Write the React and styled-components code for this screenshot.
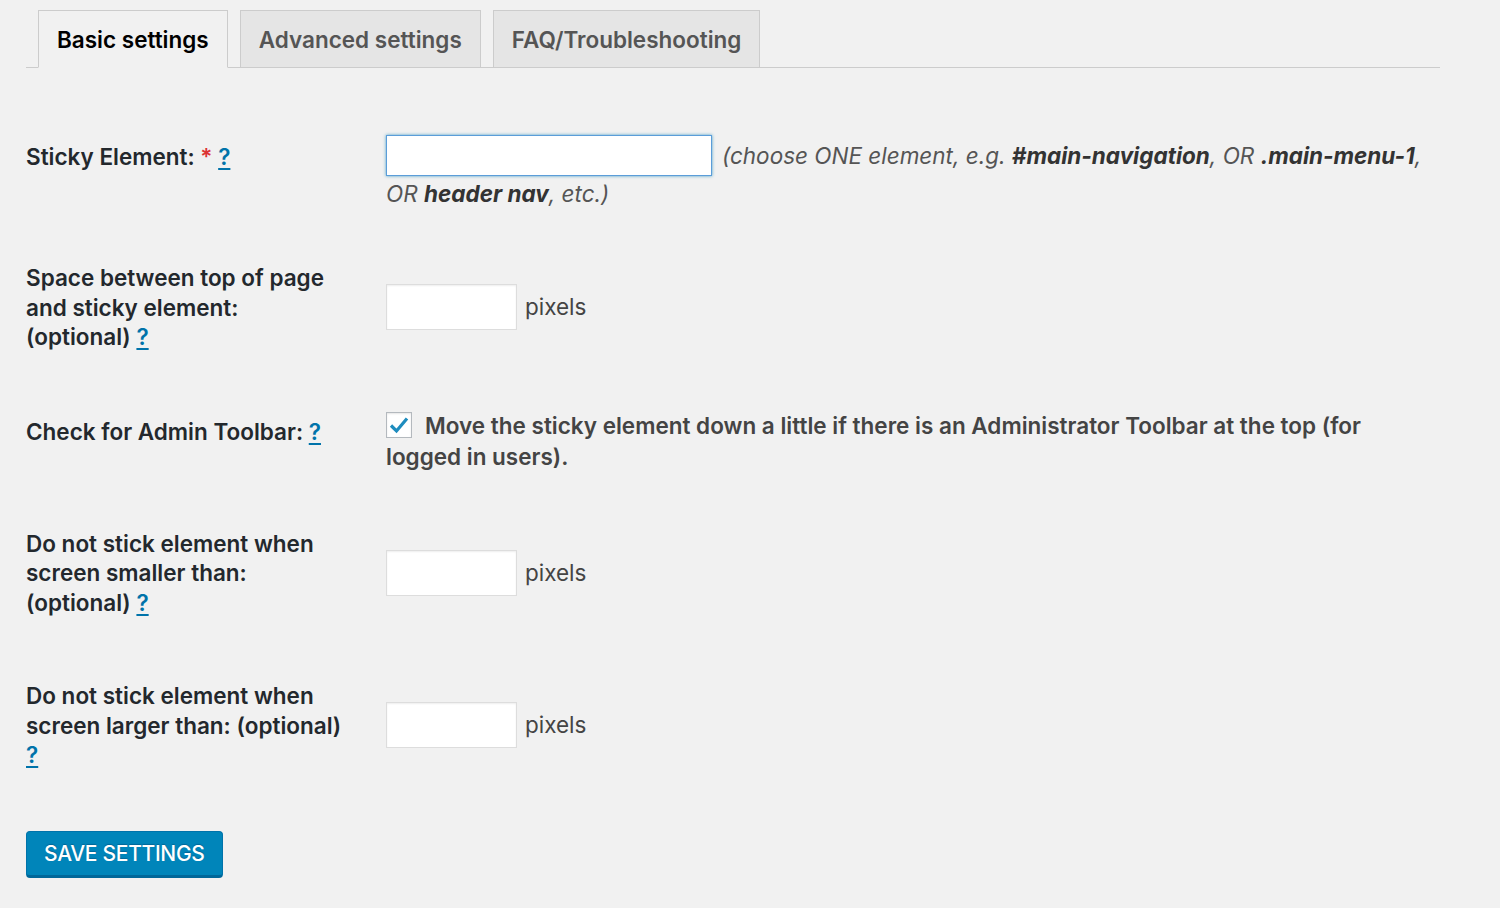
import React, { useState } from "react";
import styled, { createGlobalStyle } from "styled-components";

const GlobalStyle = createGlobalStyle`
  body {
    margin: 0;
    background: #f1f1f1;
    font-family: Inter, "Liberation Sans", sans-serif;
    color: #444;
  }
`;

const Page = styled.div`
  width: 1414px;
  padding: 10px 0 0 26px;
`;

const TabNav = styled.nav`
  display: flex;
  gap: 12px;
  padding-left: 12px;
  border-bottom: 1px solid #ccc;
`;

const Tab = styled.a`
  display: flex;
  align-items: center;
  height: 56px;
  padding: 0 18px;
  margin-bottom: -1px;
  border: 1px solid #ccc;
  border-bottom-color: ${(p) => (p.$active ? "#f1f1f1" : "#ccc")};
  background: ${(p) => (p.$active ? "#f1f1f1" : "#e5e5e5")};
  color: ${(p) => (p.$active ? "#000" : "#555")};
  font-size: 22.5px;
  font-weight: 600;
  text-decoration: none;
  cursor: pointer;
`;

const Form = styled.form`
  display: flex;
  flex-direction: column;
  padding-top: 67px;
`;

const Row = styled.div`
  display: grid;
  grid-template-columns: 360px 1fr;
  align-items: ${(p) => (p.$center ? "center" : "start")};
  margin-top: ${(p) => p.$top}px;
`;

const Label = styled.div`
  max-width: 318px;
  font-size: 22.5px;
  font-weight: 600;
  line-height: 29.5px;
  color: #23282d;
  margin-top: ${(p) => p.$offset || 0}px;
`;

const Help = styled.a`
  color: #0073aa;
  text-decoration: underline;
  text-underline-offset: 3px;
  cursor: pointer;
`;

const Required = styled.span`
  color: #dc3232;
`;

const Field = styled.div`
  font-size: 22.5px;
  line-height: ${(p) => p.$lh || 35}px;
  color: #444;
`;

const TextInput = styled.input`
  box-sizing: border-box;
  width: ${(p) => p.$w}px;
  height: ${(p) => p.$h}px;
  vertical-align: middle;
  background: #fff;
  border: 1px solid ${(p) => (p.$focus ? "#5b9dd9" : "#ddd")};
  box-shadow: ${(p) =>
    p.$focus
      ? "0 0 3px rgba(30, 140, 190, 0.8)"
      : "inset 0 1px 2px rgba(0, 0, 0, 0.07)"};
  border-radius: 0;
  outline: none;
  font: inherit;
  padding: 0 8px;
`;

const Desc = styled.span`
  font-style: italic;
  color: #555;
  margin-left: 10px;
  position: relative;
  top: 2px;
  b {
    color: #333;
    font-weight: 700;
  }
`;

const Unit = styled.span`
  margin-left: 8px;
  position: relative;
  top: 2px;
`;

const CheckLabel = styled.label`
  font-weight: 600;
  color: #444;
`;

const Box = styled.span`
  display: inline-flex;
  align-items: center;
  justify-content: center;
  box-sizing: border-box;
  width: 26px;
  height: 26px;
  margin-right: 13px;
  vertical-align: middle;
  position: relative;
  top: -2px;
  background: #fff;
  border: 1px solid #b4b9be;
  box-shadow: inset 0 1px 2px rgba(0, 0, 0, 0.1);
  cursor: pointer;
`;

const SaveButton = styled.button`
  align-self: flex-start;
  margin-top: 61px;
  height: 47px;
  padding: 0 17px;
  background: #0085ba;
  border: 1px solid #0073aa;
  border-bottom: 3px solid #006799;
  border-radius: 4px;
  color: #fff;
  font-family: Inter, "Liberation Sans", sans-serif;
  font-size: 21px;
  font-weight: 500;
  letter-spacing: -0.3px;
  text-transform: uppercase;
  text-shadow: 0 -1px 1px #006799;
  cursor: pointer;
`;

const Check = () => (
  <svg width="20" height="18" viewBox="0 0 20 18">
    <path d="M2 9.5 L7.5 15 L18 2.5" fill="none" stroke="#1e8cbe" strokeWidth="3.2" />
  </svg>
);

const App = () => {
  const [tab, setTab] = useState(0);
  const [admin, setAdmin] = useState(true);
  const tabs = ["Basic settings", "Advanced settings", "FAQ/Troubleshooting"];

  return (
    <Page>
      <GlobalStyle />
      <TabNav>
        {tabs.map((t, i) => (
          <Tab key={t} $active={tab === i} onClick={() => setTab(i)}>
            {t}
          </Tab>
        ))}
      </TabNav>
      <Form onSubmit={(e) => e.preventDefault()}>
        <Row $top={0}>
          <Label $offset={7}>
            Sticky Element: <Required>*</Required> <Help>?</Help>
          </Label>
          <Field $lh={31}>
            <TextInput $w={326} $h={41} $focus />
            <Desc>
              (choose ONE element, e.g. <b>#main-navigation</b>, OR <b>.main-menu-1</b>,
              OR <b>header nav</b>, etc.)
            </Desc>
          </Field>
        </Row>
        <Row $top={56} $center>
          <Label>
            Space between top of page and sticky element: (optional) <Help>?</Help>
          </Label>
          <Field>
            <TextInput $w={131} $h={46} />
            <Unit>pixels</Unit>
          </Field>
        </Row>
        <Row $top={58}>
          <Label $offset={7}>
            Check for Admin Toolbar: <Help>?</Help>
          </Label>
          <Field $lh={31}>
            <CheckLabel onClick={() => setAdmin(!admin)}>
              <Box>{admin && <Check />}</Box>
              Move the sticky element down a little if there is an Administrator Toolbar at the top (for logged in users).
            </CheckLabel>
          </Field>
        </Row>
        <Row $top={57} $center>
          <Label>
            Do not stick element when screen smaller than: (optional) <Help>?</Help>
          </Label>
          <Field>
            <TextInput $w={131} $h={46} />
            <Unit>pixels</Unit>
          </Field>
        </Row>
        <Row $top={64} $center>
          <Label>
            Do not stick element when screen larger than: (optional) <Help>?</Help>
          </Label>
          <Field>
            <TextInput $w={131} $h={46} />
            <Unit>pixels</Unit>
          </Field>
        </Row>
        <SaveButton type="submit">Save Settings</SaveButton>
      </Form>
    </Page>
  );
};

export default App;
